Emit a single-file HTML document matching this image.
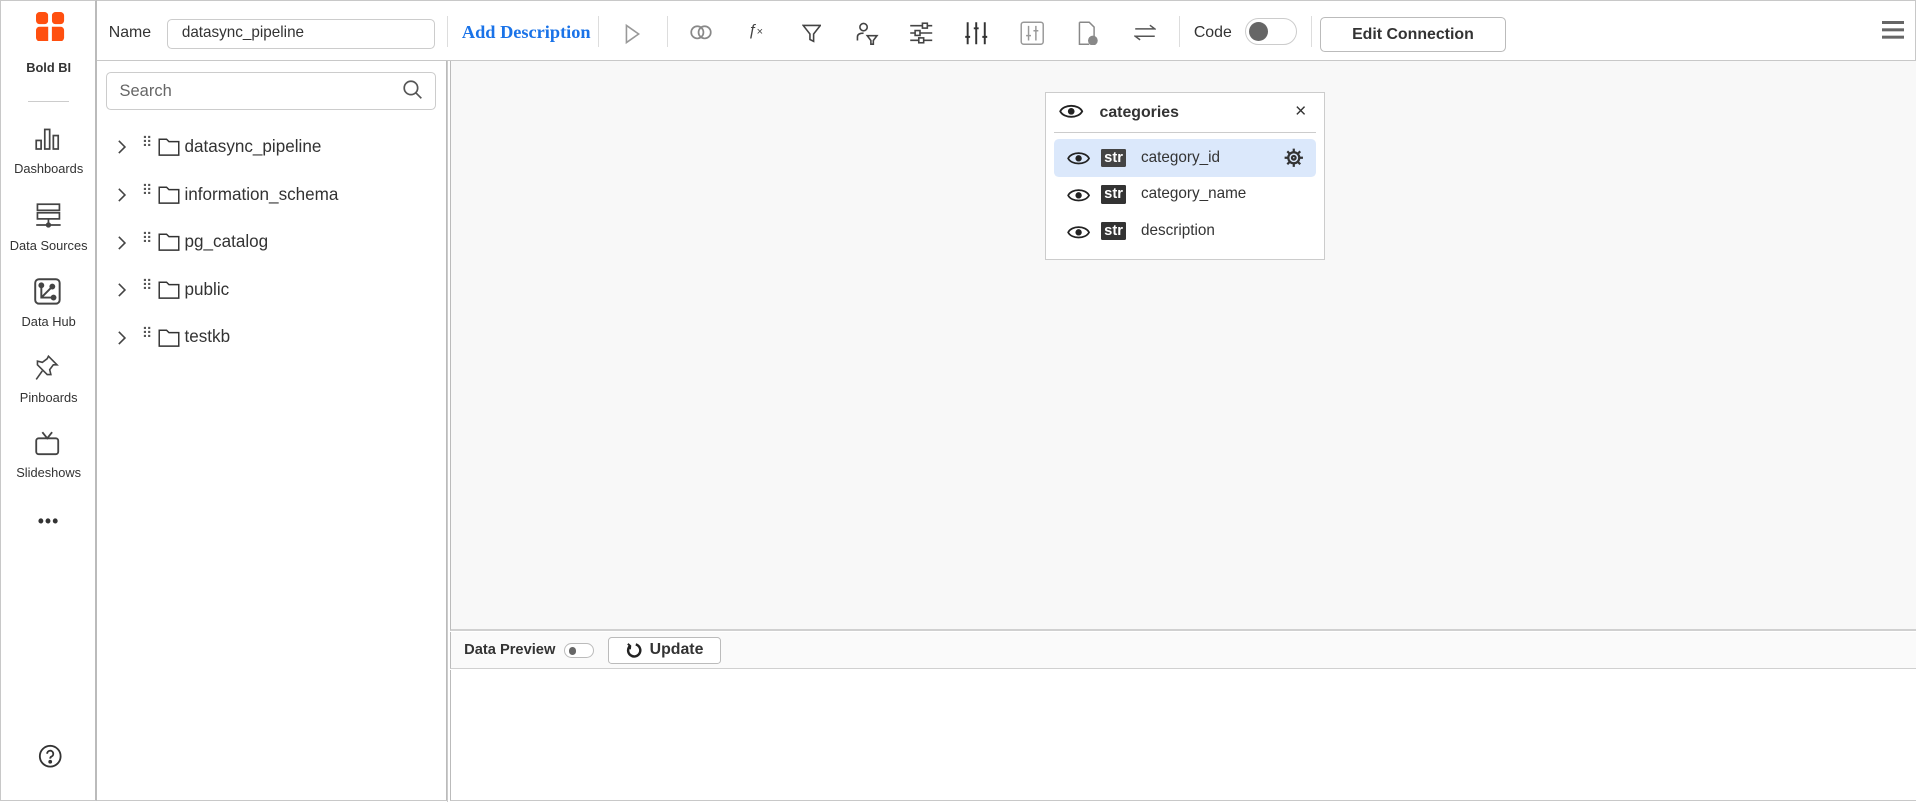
<!DOCTYPE html>
<html><head><meta charset="utf-8"><style>
html{zoom:1.22194}
body{margin:0;width:1568px;height:656px;overflow:hidden;font-family:"Liberation Sans",sans-serif;color:#333;background:#fff;position:relative}
.a{position:absolute}
.nav{left:0;top:0;width:77px;height:654px;border:1px solid #c8c8c8;border-right:2px solid #bbb;background:#fff}
.lbl{position:absolute;width:78px;left:0;text-align:center;font-size:10.5px;color:#333}
.ic{position:absolute;left:26px}
.top{left:79px;top:0;width:1488px;height:48px;border-top:1px solid #c8c8c8;border-bottom:1px solid #c8c8c8;border-right:1px solid #c8c8c8;background:#fff}
.sep{position:absolute;top:12px;width:1px;height:26px;background:#ddd}
.tb{position:absolute;top:15px}
.lp{left:79px;top:50px;width:286px;height:605px;border-right:1px solid #bbb;background:#fff;border-bottom:1px solid #c8c8c8}
.tree{position:absolute;left:0;height:20px;font-size:14px;color:#333}
.canvas{left:368px;top:50px;width:1199px;height:465px;background:#f8f8f8;border-left:1px solid #bbb;border-bottom:2px solid #d0d0d0;border-right:1px solid #c8c8c8}
.dp{left:368px;top:517px;width:1199px;height:30px;background:#fafafa;border-bottom:1px solid #d0d0d0;border-left:1px solid #bbb;border-right:1px solid #c8c8c8}
.bot{left:368px;top:548px;width:1199px;height:107px;background:#fff;border-left:1px solid #bbb;border-right:1px solid #c8c8c8;border-bottom:1px solid #c8c8c8}
.card{left:855px;top:75px;width:228px;height:136px;border:1px solid #ccc;background:#fff}
.row{position:absolute;left:7px;width:214px;height:31px;font-size:12.5px;color:#333}
.str{position:absolute;left:38px;top:8px;width:21px;height:15px;background:#333;color:#fff;font-size:12px;font-weight:bold;line-height:15px;text-align:center;border-radius:1px}
.row span.t{position:absolute;left:71px;top:8px}
</style></head><body>
<div class="a nav">
 <svg class="a" style="left:29px;top:9px" width="23" height="24" viewBox="0 0 23 24"><rect x="0" y="0" width="10" height="10" rx="3" fill="#ff4f0f"/><rect x="13" y="0" width="10" height="10" rx="3" fill="#ff4f0f"/><rect x="0" y="12" width="23" height="12" rx="3" fill="#ff4f0f"/><rect x="10" y="0" width="3" height="24" fill="#fff"/><rect x="0" y="10" width="23" height="2" fill="#fff"/></svg>
 <div class="lbl" style="top:48px;font-size:10.5px;font-weight:bold;color:#333">Bold BI</div>
 <div class="a" style="left:22px;top:82px;width:34px;height:1px;background:#ccc"></div>
 <svg class="ic" style="left:28px;top:103px" width="20" height="20" viewBox="0 0 20 20" fill="none" stroke="#444" stroke-width="1.4"><rect x="1" y="11" width="4" height="7"/><rect x="8" y="2" width="4" height="16"/><rect x="15" y="7" width="4" height="11"/></svg>
 <div class="lbl" style="top:131px">Dashboards</div>
 <svg class="ic" style="left:28px;top:165px" width="22" height="22" viewBox="0 0 22 22" fill="none" stroke="#444" stroke-width="1.4"><rect x="2" y="1" width="18" height="5"/><rect x="2" y="8" width="18" height="5"/><path d="M11 13v5M1 18h20"/><circle cx="11" cy="18" r="1.5" fill="#444"/></svg>
 <div class="lbl" style="top:194px">Data Sources</div>
 <svg class="ic" style="left:27px;top:227px" width="22" height="22" viewBox="0 0 22 22" fill="none" stroke="#444" stroke-width="1.6"><rect x="1" y="1" width="20" height="20" rx="3"/><path d="M6 6v10h10M6 16l9-9"/><circle cx="6" cy="6" r="1.6" fill="#444"/><circle cx="15" cy="7" r="1.6" fill="#444"/><circle cx="16" cy="16" r="1.6" fill="#444"/></svg>
 <div class="lbl" style="top:256px">Data Hub</div>
 <svg class="ic" style="left:28px;top:290px" width="20" height="22" viewBox="0 0 20 22" fill="none" stroke="#444" stroke-width="1.3"><path d="M11 1l7 7-3 0-3 4 1 4-3 0-8-8 0-3 4 1 4-3z"/><path d="M6 13l-5 7"/></svg>
 <div class="lbl" style="top:318px">Pinboards</div>
 <svg class="ic" style="left:28px;top:352px" width="20" height="20" viewBox="0 0 20 20" fill="none" stroke="#444" stroke-width="1.5"><rect x="1" y="6" width="18" height="13" rx="2"/><path d="M6 1l4 5 4-5"/></svg>
 <div class="lbl" style="top:380px">Slideshows</div>
 <div class="lbl" style="top:418px;font-size:14px;font-weight:bold;letter-spacing:1px">•••</div>
 <svg class="a" style="left:30px;top:608px" width="20" height="20" viewBox="0 0 20 20" fill="none" stroke="#333" stroke-width="1.5"><circle cx="10" cy="10" r="8.5"/><path d="M7.5 8a2.5 2.5 0 1 1 3.5 2.3c-.8.4-1 1-1 1.7"/><circle cx="10" cy="14.5" r=".8" fill="#333"/></svg>
</div>

<div class="a top">
 <div class="a" style="left:10px;top:19px;font-size:13px;color:#333">Name</div>
 <div class="a" style="left:58px;top:15px;border:1px solid #ccc;border-radius:4px;font-size:12.5px;line-height:22px;padding-left:11px;box-sizing:border-box;width:219px;height:24px">datasync_pipeline</div>
 <div class="sep" style="left:287px"></div>
 <div class="a" style="left:299px;top:17px;font-family:'Liberation Serif',serif;font-weight:bold;font-size:15px;color:#1a73e8">Add Description</div>
 <div class="sep" style="left:410px"></div>
 <svg class="tb" style="left:432px;top:18px" width="14" height="18" viewBox="0 0 14 18" fill="none" stroke="#999" stroke-width="1.3"><path d="M2 2l10 7-10 7z"/></svg>
 <div class="sep" style="left:467px"></div>
 <svg class="tb" style="left:486px;top:20px" width="18" height="12" viewBox="0 0 18 12" fill="none" stroke="#888" stroke-width="1.4"><circle cx="6" cy="6" r="5"/><circle cx="12" cy="6" r="5"/></svg>
 <div class="tb" style="left:533px;top:17px;font-size:13px;color:#444;font-style:italic">ƒ<span style="font-size:9px;font-style:normal">×</span></div>
 <svg class="tb" style="left:577px;top:18px" width="16" height="16" viewBox="0 0 16 16" fill="none" stroke="#444" stroke-width="1.3"><path d="M1 2h14l-5.5 7v6l-3-1.5V9z"/></svg>
 <svg class="tb" style="left:621px;top:16px" width="20" height="20" viewBox="0 0 20 20" fill="none" stroke="#444" stroke-width="1.3"><circle cx="7" cy="5" r="3"/><path d="M2 16v-3c0-2 2-3 5-3"/><path d="M10 12h8l-3 4v3h-2v-3z"/></svg>
 <svg class="tb" style="left:665px;top:17px" width="20" height="18" viewBox="0 0 20 18" fill="none" stroke="#444" stroke-width="1.3"><path d="M1 3h18M1 9h18M1 15h18"/><rect x="11" y="1" width="4" height="4" fill="#fff"/><rect x="5" y="7" width="4" height="4" fill="#fff"/><rect x="8" y="13" width="4" height="4" fill="#fff"/></svg>
 <svg class="tb" style="left:710px;top:16px" width="20" height="20" viewBox="0 0 20 20" fill="none" stroke="#333" stroke-width="1.6"><path d="M3 1v18M10 1v18M17 1v18M1 13h4M8 6h4M15 13h4"/></svg>
 <svg class="tb" style="left:756px;top:16px" width="20" height="20" viewBox="0 0 20 20" fill="none" stroke="#999" stroke-width="1.2"><rect x="1" y="1" width="18" height="18" rx="2"/><path d="M7 4v12M13 4v12M5 12h4M11 8h4"/></svg>
 <svg class="tb" style="left:802px;top:16px" width="18" height="20" viewBox="0 0 18 20" fill="none" stroke="#888" stroke-width="1.2"><path d="M2 1h8l4 4v8M2 1v18h8"/><circle cx="13" cy="16" r="4" fill="#888" stroke="none"/></svg>
 <svg class="tb" style="left:849px;top:19px" width="18" height="14" viewBox="0 0 18 14" fill="none" stroke="#555" stroke-width="1.2"><path d="M1 4h16L13 1M17 10H1l4 3"/></svg>
 <div class="sep" style="left:886px"></div>
 <div class="a" style="left:898px;top:19px;font-size:13px;color:#333">Code</div>
 <div class="a" style="left:940px;top:14px;width:41px;height:20px;border:1px solid #ccc;border-radius:11px;background:#fff"><div class="a" style="left:2px;top:2px;width:16px;height:16px;border-radius:50%;background:#666"></div></div>
 <div class="sep" style="left:994px"></div>
 <div class="a" style="left:1001px;top:13px;width:151px;height:27px;border:1px solid #bbb;border-radius:4px;text-align:center;line-height:27px;font-size:13px;color:#333;font-weight:bold">Edit Connection</div>
 <div class="a" style="left:1461px;top:16px;width:18px;height:3px;background:#666;box-shadow:0 6px 0 #666,0 12px 0 #666"></div>
</div>

<div class="a lp">
 <div class="a" style="left:8px;top:9px;width:268px;height:29px;border:1px solid #ccc;border-radius:4px"><span class="a" style="left:10px;top:7px;font-size:13.5px;color:#666">Search</span>
 <svg class="a" style="left:242px;top:6px" width="16" height="16" viewBox="0 0 16 16" fill="none" stroke="#555" stroke-width="1.4"><circle cx="6.5" cy="6.5" r="5.5"/><path d="M10.5 10.5l4.5 4.5"/></svg></div>
</div>
<div class="a" style="left:366px;top:50px;width:1px;height:606px;background:#ccc"></div>

<div class="a" style="left:79px;top:0;width:290px;height:656px;pointer-events:none">
 <div class="tree" style="top:111px"><svg class="a" style="left:17px;top:3px" width="8" height="13" viewBox="0 0 8 13" fill="none" stroke="#444" stroke-width="1.3"><path d="M1.5 1.5l5 5-5 5"/></svg><span class="a" style="left:37px;top:-1px;font-size:12px;letter-spacing:-1px;color:#555">⠿</span><svg class="a" style="left:50px;top:2px" width="18" height="15" viewBox="0 0 18 15" fill="none" stroke="#333" stroke-width="1.2"><path d="M1 1h6l2 2h8v11H1z"/></svg><span class="a" style="left:72px;top:1px;white-space:nowrap">datasync_pipeline</span></div>
 <div class="tree" style="top:150px"><svg class="a" style="left:17px;top:3px" width="8" height="13" viewBox="0 0 8 13" fill="none" stroke="#444" stroke-width="1.3"><path d="M1.5 1.5l5 5-5 5"/></svg><span class="a" style="left:37px;top:-1px;font-size:12px;letter-spacing:-1px;color:#555">⠿</span><svg class="a" style="left:50px;top:2px" width="18" height="15" viewBox="0 0 18 15" fill="none" stroke="#333" stroke-width="1.2"><path d="M1 1h6l2 2h8v11H1z"/></svg><span class="a" style="left:72px;top:1px;white-space:nowrap">information_schema</span></div>
 <div class="tree" style="top:189px"><svg class="a" style="left:17px;top:3px" width="8" height="13" viewBox="0 0 8 13" fill="none" stroke="#444" stroke-width="1.3"><path d="M1.5 1.5l5 5-5 5"/></svg><span class="a" style="left:37px;top:-1px;font-size:12px;letter-spacing:-1px;color:#555">⠿</span><svg class="a" style="left:50px;top:2px" width="18" height="15" viewBox="0 0 18 15" fill="none" stroke="#333" stroke-width="1.2"><path d="M1 1h6l2 2h8v11H1z"/></svg><span class="a" style="left:72px;top:1px;white-space:nowrap">pg_catalog</span></div>
 <div class="tree" style="top:228px"><svg class="a" style="left:17px;top:3px" width="8" height="13" viewBox="0 0 8 13" fill="none" stroke="#444" stroke-width="1.3"><path d="M1.5 1.5l5 5-5 5"/></svg><span class="a" style="left:37px;top:-1px;font-size:12px;letter-spacing:-1px;color:#555">⠿</span><svg class="a" style="left:50px;top:2px" width="18" height="15" viewBox="0 0 18 15" fill="none" stroke="#333" stroke-width="1.2"><path d="M1 1h6l2 2h8v11H1z"/></svg><span class="a" style="left:72px;top:1px;white-space:nowrap">public</span></div>
 <div class="tree" style="top:267px"><svg class="a" style="left:17px;top:3px" width="8" height="13" viewBox="0 0 8 13" fill="none" stroke="#444" stroke-width="1.3"><path d="M1.5 1.5l5 5-5 5"/></svg><span class="a" style="left:37px;top:-1px;font-size:12px;letter-spacing:-1px;color:#555">⠿</span><svg class="a" style="left:50px;top:2px" width="18" height="15" viewBox="0 0 18 15" fill="none" stroke="#333" stroke-width="1.2"><path d="M1 1h6l2 2h8v11H1z"/></svg><span class="a" style="left:72px;top:1px;white-space:nowrap">testkb</span></div>
</div>

<div class="a canvas"></div>
<div class="a dp">
 <span class="a" style="left:11px;top:8px;font-size:12px;font-weight:bold;color:#333">Data Preview</span>
 <div class="a" style="left:93px;top:9px;width:23px;height:11px;border:1px solid #bbb;border-radius:7px;background:#fff"><div class="a" style="left:3px;top:3px;width:6px;height:6px;border-radius:50%;background:#666"></div></div>
 <div class="a" style="left:129px;top:4px;width:91px;height:21px;border:1px solid #bbb;border-radius:3px;background:#fff">
  <svg class="a" style="left:14px;top:4px" width="13" height="13" viewBox="0 0 13 13" fill="none" stroke="#222" stroke-width="2"><path d="M3.5 3A5 5 0 1 0 8 2"/><path d="M1.5 1.5l2 1.8-0.3 2.6" stroke-width="1.6"/></svg>
  <span class="a" style="left:33px;top:3px;font-size:13px;font-weight:bold;color:#333">Update</span></div>
</div>
<div class="a bot"></div>

<div class="a card">
 <svg class="a" style="left:11px;top:9px" width="20" height="12" viewBox="0 0 20 12" fill="none" stroke="#222" stroke-width="1.5"><path d="M1 6c3-6 15-6 18 0c-3 6-15 6-18 0z"/><circle cx="10" cy="6" r="2" fill="#222"/></svg>
 <span class="a" style="left:44px;top:9px;font-size:13px;font-weight:bold;color:#333">categories</span>
 <span class="a" style="left:204px;top:6px;font-size:16px;color:#333">×</span>
 <div class="a" style="left:7px;top:32px;width:214px;height:1px;background:#ccc"></div>
 <div class="row" style="top:38px;background:#dbe8fb;border-radius:4px">
  <svg class="a" style="left:10px;top:10px" width="19" height="12" viewBox="0 0 20 12" fill="none" stroke="#222" stroke-width="1.5"><path d="M1 6c3-6 15-6 18 0c-3 6-15 6-18 0z"/><circle cx="10" cy="6" r="2" fill="#222"/></svg>
  <div class="str" style="background:#444">str</div><span class="t">category_id</span>
  <svg class="a" style="left:188px;top:7px" width="16" height="16" viewBox="0 0 16 16" fill="none" stroke="#333" stroke-width="1.8"><circle cx="8" cy="8" r="4.5"/><circle cx="8" cy="8" r="1.5"/><path d="M8 0.5v2.5M8 13v2.5M0.5 8h2.5M13 8h2.5M2.7 2.7l1.8 1.8M11.5 11.5l1.8 1.8M2.7 13.3l1.8-1.8M11.5 4.5l1.8-1.8"/></svg>
 </div>
 <div class="row" style="top:68px">
  <svg class="a" style="left:10px;top:10px" width="19" height="12" viewBox="0 0 20 12" fill="none" stroke="#222" stroke-width="1.5"><path d="M1 6c3-6 15-6 18 0c-3 6-15 6-18 0z"/><circle cx="10" cy="6" r="2" fill="#222"/></svg>
  <div class="str">str</div><span class="t">category_name</span></div>
 <div class="row" style="top:98px">
  <svg class="a" style="left:10px;top:10px" width="19" height="12" viewBox="0 0 20 12" fill="none" stroke="#222" stroke-width="1.5"><path d="M1 6c3-6 15-6 18 0c-3 6-15 6-18 0z"/><circle cx="10" cy="6" r="2" fill="#222"/></svg>
  <div class="str">str</div><span class="t">description</span></div>
</div>
</body></html>
